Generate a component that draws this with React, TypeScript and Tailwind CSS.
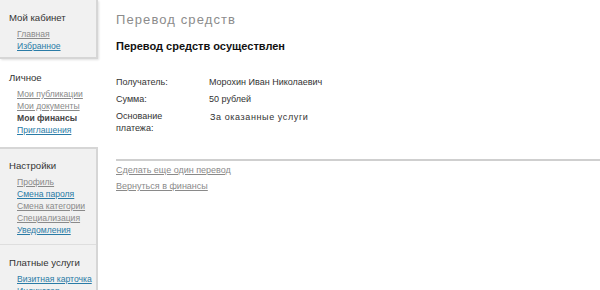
import React from "react";

type Link = { label: string; tone?: "grey" | "blue" | "bold" };

const font = { fontFamily: '"Liberation Sans", Arial, sans-serif' };

function Links({ links }: { links: Link[] }) {
  return (
    <ul className="mt-[4px] pl-[8px]">
      {links.map((l) => (
        <li key={l.label} className="whitespace-nowrap text-[8.6px] leading-[12px]">
          {l.tone === "bold" ? (
            <span className="font-bold text-[#444]">{l.label}</span>
          ) : (
            <a className={`underline ${l.tone === "blue" ? "text-[#2a7ba6]" : "text-[#8a8a8a]"}`}>{l.label}</a>
          )}
        </li>
      ))}
    </ul>
  );
}

function Block({ title, links, className }: { title: string; links: Link[]; className: string }) {
  return (
    <div className={`pl-[9px] ${className}`}>
      <div className="text-[9.6px] leading-[13px] text-[#333]">{title}</div>
      <Links links={links} />
    </div>
  );
}

export default function App() {
  return (
    <div className="flex h-[290px] w-[600px] overflow-hidden bg-white" style={font}>
      {/* левая колонка */}
      <div className="w-[98px] shrink-0">
        <div className="border-b-[2px] border-r-[2px] border-[#d6d6d6] bg-[#f1f1f1] shadow-[1px_1px_2px_rgba(0,0,0,0.12)]">
          <Block className="pt-[11px] pb-[5px]" title="Мой кабинет" links={[{ label: "Главная" }, { label: "Избранное", tone: "blue" }]} />
        </div>
        <div className="h-[88px]">
          <Block
            className="pt-[12px]"
            title="Личное"
            links={[
              { label: "Мои публикации" },
              { label: "Мои документы" },
              { label: "Мои финансы", tone: "bold" },
              { label: "Приглашения", tone: "blue" },
            ]}
          />
        </div>
        <div className="h-[200px] border-r-[2px] border-t-[2px] border-[#d6d6d6] bg-[#f1f1f1]">
          <Block
            className="pt-[10px] pb-[8px]"
            title="Настройки"
            links={[
              { label: "Профиль" },
              { label: "Смена пароля", tone: "blue" },
              { label: "Смена категории" },
              { label: "Специализация" },
              { label: "Уведомления", tone: "blue" },
            ]}
          />
          <div className="border-t border-[#dedede]" />
          <Block
            className="pt-[11px]"
            title="Платные услуги"
            links={[{ label: "Визитная карточка", tone: "blue" }, { label: "Индикатор", tone: "blue" }]}
          />
        </div>
      </div>

      {/* основная часть */}
      <div className="flex-1 pl-[18px] pt-[12px]">
        <h1 className="text-[13px] leading-[16px] tracking-[1.1px] text-[#8c8c8c]">Перевод средств</h1>
        <h2 className="mt-[11px] text-[11px] font-bold leading-[14px] text-[#111]">Перевод средств осуществлен</h2>

        <table className="mt-[23px] text-[9px] leading-[12px] text-[#333]">
          <tbody>
            <tr>
              <td className="w-[93px] pb-[5px] align-top">Получатель:</td>
              <td className="pb-[5px] align-top">Морохин Иван Николаевич</td>
            </tr>
            <tr>
              <td className="pb-[5px] align-top">Сумма:</td>
              <td className="pb-[5px] align-top">50 рублей</td>
            </tr>
            <tr>
              <td className="align-top">
                Основание
                <br />
                платежа:
              </td>
              <td className="pl-[1px] pt-[1px] align-top tracking-[0.6px]">За оказанные услуги</td>
            </tr>
          </tbody>
        </table>

        <div className="mt-[25px] border-t-[2px] border-[#cfcfcf]" />
        <div className="mt-[1px] text-[9px] leading-[16px]">
          <a className="block text-[#8a8a8a] underline">Сделать еще один перевод</a>
          <a className="block text-[#8a8a8a] underline">Вернуться в финансы</a>
        </div>
      </div>
    </div>
  );
}
